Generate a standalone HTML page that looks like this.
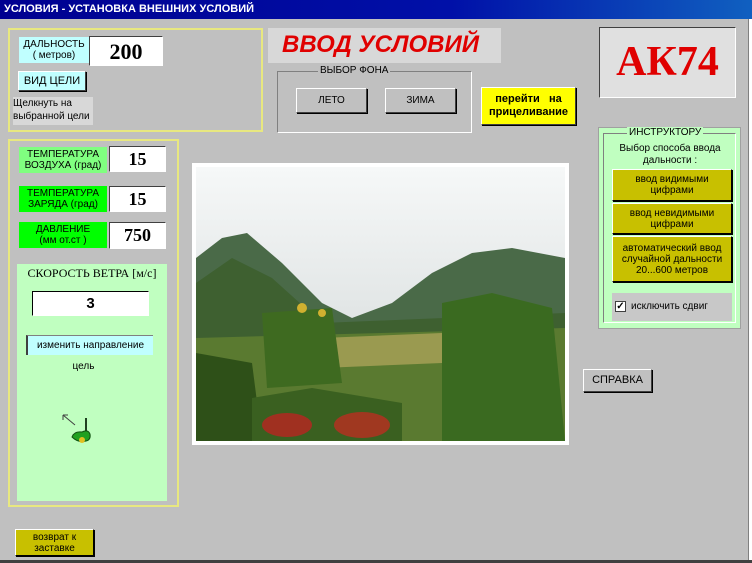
<!DOCTYPE html>
<html><head><meta charset="utf-8"><style>
body{margin:0;width:752px;height:563px;background:#c0c0c0;position:relative;overflow:hidden;font-family:"Liberation Sans",sans-serif;font-size:10px;color:#000}
.a{position:absolute;box-sizing:border-box}
.c{display:flex;align-items:center;justify-content:center;text-align:center;line-height:11px}
.btn{border:1px solid;border-color:#fff #404040 #404040 #fff;box-shadow:1px 1px 0 #000}
.val{background:#fff;border:1px solid;border-color:#404040 #fff #fff #404040;font-family:"Liberation Serif",serif;font-weight:bold;font-size:18px}
</style></head><body>
<div class="a" style="left:0;top:0;width:752px;height:19px;background:linear-gradient(90deg,#000090,#0010a8 60%,#1060c0);color:#fff;font-weight:bold;font-size:11px;line-height:19px;padding-left:4px">УСЛОВИЯ - УСТАНОВКА ВНЕШНИХ УСЛОВИЙ</div>
<div class="a" style="left:748px;top:19px;width:4px;height:544px;background:#fff;border-left:1px solid #808080"></div>
<div class="a" style="left:0;top:560px;width:752px;height:3px;background:#404040"></div>

<div class="a" style="left:8px;top:28px;width:255px;height:104px;border:2px solid #e8e880"></div>
<div class="a c" style="left:19px;top:37px;width:70px;height:26px;background:#c0ffff">ДАЛЬНОСТЬ<br>( метров)</div>
<div class="a c val" style="left:89px;top:36px;width:74px;height:30px;font-size:22px">200</div>
<div class="a c btn" style="left:18px;top:71px;width:68px;height:20px;background:#c0ffff;font-size:11px">ВИД ЦЕЛИ</div>
<div class="a" style="left:13px;top:97px;width:80px;height:28px;background:#d8d8d8;line-height:13px">Щелкнуть на<br>выбранной цели</div>

<div class="a" style="left:8px;top:139px;width:171px;height:368px;border:2px solid #e8e880"></div>
<div class="a c" style="left:19px;top:147px;width:88px;height:26px;background:#80ff80">ТЕМПЕРАТУРА<br>ВОЗДУХА (град)</div>
<div class="a c val" style="left:109px;top:146px;width:57px;height:26px">15</div>
<div class="a c" style="left:19px;top:186px;width:88px;height:26px;background:#00ff00">ТЕМПЕРАТУРА<br>ЗАРЯДА (град)</div>
<div class="a c val" style="left:109px;top:186px;width:57px;height:26px">15</div>
<div class="a c" style="left:19px;top:222px;width:88px;height:26px;background:#00ff00">ДАВЛЕНИЕ<br>(мм от.ст )</div>
<div class="a c val" style="left:109px;top:222px;width:57px;height:27px">750</div>
<div class="a" style="left:17px;top:264px;width:150px;height:237px;background:#c0ffc0"></div>
<div class="a" style="left:17px;top:266px;width:150px;text-align:center;font-family:'Liberation Serif',serif;font-size:12px">СКОРОСТЬ ВЕТРА [м/с]</div>
<div class="a c" style="left:32px;top:291px;width:117px;height:25px;background:#fff;border:1px solid;border-color:#000 #fff #fff #000;font-size:15px;font-weight:bold">3</div>
<div class="a c" style="left:26px;top:335px;width:127px;height:20px;background:#c0ffff;border-left:2px solid #404040;border-top:1px solid #808080">изменить направление</div>
<div class="a" style="left:17px;top:361px;width:133px;text-align:center">цель</div>
<svg class="a" style="left:58px;top:410px" width="40" height="40"><path d="M5 5 L17 15 M5 5 l5 0 M5 5 l0 5" stroke="#404040" fill="none"/><line x1="28" y1="8" x2="28" y2="24" stroke="#204020" stroke-width="2"/><path d="M14 27 q2 -6 10 -5 q6 -3 8 2 q1 6 -4 7 q-8 2 -14 -4z" fill="#20a020" stroke="#105010"/><circle cx="24" cy="30" r="3" fill="#e0c020"/></svg>
<div class="a c btn" style="left:15px;top:529px;width:79px;height:27px;background:#c8c000;border-color:#fff #000 #000 #fff">возврат к<br>заставке</div>

<div class="a" style="left:268px;top:28px;width:233px;height:35px;background:#d8d8d8;color:#e00000;font-weight:bold;font-style:italic;font-size:24px;line-height:33px;padding-left:14px">ВВОД УСЛОВИЙ</div>
<div class="a" style="left:277px;top:71px;width:195px;height:62px;border:1px solid;border-color:#808080 #fff #fff #808080"></div>
<div class="a" style="left:318px;top:65px;background:#c0c0c0;padding:0 2px">ВЫБОР ФОНА</div>
<div class="a c btn" style="left:296px;top:88px;width:71px;height:25px;background:#c0c0c0">ЛЕТО</div>
<div class="a c btn" style="left:385px;top:88px;width:71px;height:25px;background:#c0c0c0">ЗИМА</div>
<div class="a c btn" style="left:481px;top:87px;width:95px;height:38px;background:#ffff00;font-weight:bold;font-size:11px;line-height:13px">перейти &nbsp;&nbsp;на<br>прицеливание</div>
<div class="a c" style="left:599px;top:27px;width:137px;height:71px;background:#e0e0e0;border:1px solid;border-color:#404040 #fff #fff #404040;color:#e00000;font-family:'Liberation Serif',serif;font-weight:bold;font-size:42px">АК74</div>

<svg class="a" style="left:192px;top:163px" width="377" height="282">
<defs><linearGradient id="s" x1="0" y1="0" x2="0" y2="1"><stop offset="0" stop-color="#f6f8f8"/><stop offset="1" stop-color="#d0d6d6"/></linearGradient></defs>
<rect width="377" height="282" fill="#fff"/>
<rect x="4" y="4" width="369" height="274" fill="url(#s)"/>
<path d="M4 95 L30 75 L55 70 L90 100 L130 140 L160 155 L200 140 L240 110 L280 90 L320 85 L373 95 L373 200 L4 200Z" fill="#4a6a48"/>
<path d="M4 120 L40 95 L80 115 L130 160 L373 150 L373 278 L4 278Z" fill="#3e6030"/>
<path d="M4 175 L373 165 L373 278 L4 278Z" fill="#5a7a30"/>
<path d="M130 175 L250 170 L250 200 L130 205Z" fill="#9a9a50"/>
<path d="M250 140 L300 130 L360 145 L373 278 L250 278Z" fill="#3a6a20"/>
<path d="M70 150 L140 145 L150 220 L75 225Z" fill="#3e6a20"/>
<path d="M4 190 L60 200 L70 278 L4 278Z" fill="#2e5018"/>
<path d="M60 235 L120 225 L210 240 L210 278 L60 278Z" fill="#3a6020"/>
<ellipse cx="95" cy="262" rx="25" ry="12" fill="#a03020"/>
<ellipse cx="170" cy="262" rx="28" ry="13" fill="#a03820"/>
<circle cx="110" cy="145" r="5" fill="#d0b030"/><circle cx="130" cy="150" r="4" fill="#d0b030"/>
</svg>

<div class="a" style="left:598px;top:127px;width:143px;height:202px;background:#c0ffc0;border:1px solid #a0a0a0"></div>
<div class="a" style="left:603px;top:133px;width:133px;height:190px;border:1px solid;border-color:#808080 #fff #fff #808080"></div>
<div class="a" style="left:627px;top:127px;background:#c0ffc0;padding:0 2px">ИНСТРУКТОРУ</div>
<div class="a" style="left:600px;top:143px;width:140px;text-align:center;line-height:12px">Выбор способа ввода<br>дальности :</div>
<div class="a c btn" style="left:612px;top:169px;width:120px;height:32px;background:#c8c000;border-color:#fff #000 #000 #fff">ввод видимыми<br>цифрами</div>
<div class="a c btn" style="left:612px;top:203px;width:120px;height:31px;background:#c8c000;border-color:#fff #000 #000 #fff">ввод невидимыми<br>цифрами</div>
<div class="a c btn" style="left:612px;top:236px;width:120px;height:46px;background:#c8c000;border-color:#fff #000 #000 #fff">автоматический ввод<br>случайной дальности<br>20...600 метров</div>
<div class="a" style="left:612px;top:293px;width:120px;height:28px;background:#c8c8c8"></div>
<div class="a" style="left:615px;top:301px;width:11px;height:11px;background:#fff;border:1px solid #404040;font-size:10px;line-height:9px;text-align:center;font-weight:bold">✓</div>
<div class="a" style="left:631px;top:301px">исключить сдвиг</div>
<div class="a c btn" style="left:583px;top:369px;width:69px;height:23px;background:#c0c0c0;font-size:11px">СПРАВКА</div>
</body></html>
